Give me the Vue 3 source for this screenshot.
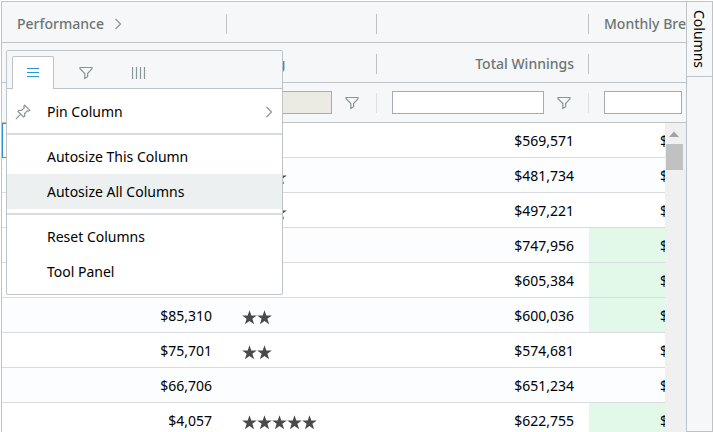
<script setup>
import { ref } from 'vue'

const rows = [
  { bank: '', stars: 0, total: '$569,571', high: false },
  { bank: '', stars: 3, total: '$481,734', high: false },
  { bank: '', stars: 3, total: '$497,221', high: false },
  { bank: '', stars: 0, total: '$747,956', high: true },
  { bank: '', stars: 0, total: '$605,384', high: true },
  { bank: '$85,310', stars: 2, total: '$600,036', high: true },
  { bank: '$75,701', stars: 2, total: '$574,681', high: false },
  { bank: '$66,706', stars: 0, total: '$651,234', high: false },
  { bank: '$4,057', stars: 5, total: '$622,755', high: true }
]

const menuGroups = [
  ['Pin Column'],
  ['Autosize This Column', 'Autosize All Columns'],
  ['Reset Columns', 'Tool Panel']
]
const active = ref('Autosize All Columns')
</script>

<template>
  <main class="grid">
    <section class="content">
      <div class="head">
        <table>
          <colgroup><col class="c-bank"><col class="c-rating"><col class="c-total"><col class="c-month"></colgroup>
          <thead>
            <tr>
              <th class="group">
                <div class="cell sep">
                  <span>Performance</span>
                  <button class="icon-button expand" aria-label="Expand Performance">
                    <svg width="12" height="12" viewBox="0 0 12 12"><path d="M3.5 1 8.5 6l-5 5" /></svg>
                  </button>
                </div>
              </th>
              <th><div class="cell sep"></div></th>
              <th><div class="cell sep"></div></th>
              <th><div class="cell">Monthly Bre</div></th>
            </tr>
            <tr>
              <th><div class="cell sep"></div></th>
              <th><div class="cell sep">Rating</div></th>
              <th><div class="cell sep right">Total Winnings</div></th>
              <th><div class="cell"></div></th>
            </tr>
            <tr>
              <td><div class="cell filter sep"></div></td>
              <td>
                <div class="cell filter sep">
                  <input type="text" disabled aria-label="Rating filter">
                  <button class="icon-button" aria-label="Filter rating">
                    <svg width="14" height="14" viewBox="0 0 14 14"><path d="M1 1.5h12v1.3L8.6 7.5v3.2l-2.8 1.8v-5L1 2.8z" /></svg>
                  </button>
                </div>
              </td>
              <td>
                <div class="cell filter sep">
                  <input type="text" aria-label="Total winnings filter">
                  <button class="icon-button" aria-label="Filter total winnings">
                    <svg width="14" height="14" viewBox="0 0 14 14"><path d="M1 1.5h12v1.3L8.6 7.5v3.2l-2.8 1.8v-5L1 2.8z" /></svg>
                  </button>
                </div>
              </td>
              <td>
                <div class="cell filter">
                  <input type="text" aria-label="Monthly filter">
                  <span class="filter-space"></span>
                </div>
              </td>
            </tr>
          </thead>
        </table>
      </div>

      <div class="body">
        <div class="viewport">
          <table>
            <colgroup><col class="c-bank"><col class="c-rating"><col class="c-total"><col class="c-month"></colgroup>
            <tbody>
              <tr v-for="(row, i) in rows" :key="i">
                <td class="number" :class="{ focused: i === 0 }">{{ row.bank }}</td>
                <td class="rating">
                  <div class="stars">
                    <svg v-for="n in row.stars" :key="n" width="15" height="15" viewBox="0 0 15 15">
                      <polygon points="7.5,0.2 9.3,5.4 14.8,5.4 10.4,8.8 12.1,14.2 7.5,11 2.9,14.2 4.6,8.8 0.2,5.4 5.7,5.4" />
                    </svg>
                  </div>
                </td>
                <td class="number">{{ row.total }}</td>
                <td class="month" :class="{ high: row.high }">$</td>
              </tr>
            </tbody>
          </table>
        </div>
        <div class="scrollbar">
          <svg width="17" height="21" viewBox="0 0 17 21"><path d="M4 14 9 8.5 14 14z" /></svg>
          <div class="thumb"></div>
        </div>
      </div>
    </section>

    <aside class="side">
      <button class="side-tab">Columns</button>
    </aside>

    <div class="menu">
      <div class="tabs">
        <button class="tab selected" aria-label="General">
          <svg width="14" height="12" viewBox="0 0 14 12"><path d="M1 1.5h12M1 5.5h12M1 9.5h12" /></svg>
        </button>
        <button class="tab" aria-label="Filter">
          <svg width="14" height="14" viewBox="0 0 14 14"><path d="M1 1.5h12v1.3L8.6 7.5v3.2l-2.8 1.8v-5L1 2.8z" /></svg>
        </button>
        <button class="tab" aria-label="Choose columns">
          <svg width="14" height="12" viewBox="0 0 14 12"><path d="M.5 0v12M4.5 0v12M8.5 0v12M12.5 0v12" /></svg>
        </button>
      </div>
      <div class="options">
        <div v-for="(group, g) in menuGroups" :key="g" class="option-group">
          <button
            v-for="item in group"
            :key="item"
            class="option"
            :class="{ active: active === item }"
            @mouseenter="active = item"
          >
            <span class="option-icon">
              <svg v-if="item === 'Pin Column'" width="16" height="16" viewBox="0 0 16 16">
                <path d="M9.6 1.2 14.8 6.4 13.4 7.2 12.2 6.9 9.6 9.5 9.7 12.2 8.6 13 3 7.4 3.9 6.3 6.6 6.5 9.2 3.9 8.8 2.6zM5.7 10.2.8 15.1" />
              </svg>
            </span>
            <span class="option-name">{{ item }}</span>
            <svg v-if="item === 'Pin Column'" width="12" height="12" viewBox="0 0 12 12"><path d="M3.5 1 8.5 6l-5 5" /></svg>
          </button>
        </div>
      </div>
    </div>
  </main>
</template>

<style>
body {
  margin: 0;
  background: #fff;
}
</style>

<style scoped>
* {
  box-sizing: border-box;
}
.grid {
  position: relative;
  display: flex;
  height: 100vh;
  padding: 1px 0 0 1px;
  overflow: hidden;
  font-family: "Noto Sans", "Open Sans", sans-serif;
  font-size: 14px;
  line-height: 20px;
  color: #000;
}
button {
  padding: 0;
  border: 0;
  background: none;
  font: inherit;
  color: inherit;
}
svg {
  display: block;
  flex: none;
  fill: none;
  stroke: #8a9597;
  stroke-width: 1.2;
}
.content {
  flex: 1;
  min-width: 0;
  display: flex;
  flex-direction: column;
  border: 1px solid #bdc3c7;
  border-width: 1px 0 0 1px;
}
.head {
  overflow: hidden;
  background: #f5f7f8;
  color: #6d7576;
}
table {
  width: 725px;
  table-layout: fixed;
  border-collapse: separate;
  border-spacing: 0;
}
.c-bank { width: 225px; }
.c-rating { width: 150px; }
.c-total { width: 212px; }
.c-month { width: 138px; }
th, td {
  padding: 0;
  font-weight: 500;
  text-align: left;
  white-space: nowrap;
}
td {
  font-weight: 400;
}
.head th, .head td {
  height: 40px;
  border-bottom: 1px solid #bdc3c7;
}
.head th {
  padding-top: 2px;
}
.head tr:first-child th {
  height: 41px;
  padding-top: 3px;
}
.cell {
  display: flex;
  align-items: center;
  height: 20px;
  padding: 0 15px;
}
.sep {
  padding-right: 14px;
  border-right: 1px solid #bdc3c7;
}
.right {
  justify-content: flex-end;
}
.expand {
  margin-left: 8px;
}
.filter {
  gap: 13px;
}
.filter .icon-button {
  width: 17px;
}
.filter.sep {
  border-color: #dde1e3;
}
input {
  flex: 1;
  min-width: 0;
  height: 23px;
  border: 1px solid #a5acb0;
  border-radius: 0;
  background: #fff;
  font: inherit;
}
input:disabled {
  background: #ebebe4;
}
.filter-space {
  width: 17px;
}
.body {
  flex: 1;
  min-height: 0;
  display: flex;
  background: #fff;
}
.viewport {
  flex: 1;
  min-width: 0;
  overflow: hidden;
}
.body td {
  height: 35px;
  padding-top: 2px;
  border-bottom: 1px solid #d9dcde;
}
.body tr:nth-child(even) td {
  background: #fcfdfe;
}
.body .number {
  padding-right: 15px;
  text-align: right;
}
.body .focused {
  border: 1px solid #2d8fd0;
}
.body .rating {
  padding: 5px 15px 0;
}
.stars {
  display: flex;
}
.stars svg {
  fill: #4a4a4a;
  stroke: none;
}
.body .month {
  padding-left: 71px;
}
.body tr .month.high {
  background: #e2f8e8;
}
.scrollbar {
  width: 21px;
  background: #f0f0f0;
}
.scrollbar svg {
  fill: #a3a3a3;
  stroke: none;
}
.thumb {
  width: 17px;
  height: 26px;
  margin-left: 1px;
  background: #c1c1c1;
}
.side {
  border: 1px solid #bdc3c7;
  background: #f5f7f8;
}
.side-tab {
  display: block;
  width: 25px;
  height: 75px;
  padding-right: 1px;
  border-bottom: 1px solid #bdc3c7;
  writing-mode: vertical-rl;
  line-height: 24px;
}
.menu {
  position: absolute;
  top: 50px;
  left: 6px;
  width: 277px;
  border: 1px solid #bdc3c7;
  border-radius: 2px;
  background: #fff;
}
.tabs {
  display: flex;
  gap: 11px;
  height: 38px;
  padding: 5px 5px 0;
  border-bottom: 1px solid #bdc3c7;
  background: #f5f7f8;
}
.tab {
  display: flex;
  align-items: center;
  justify-content: center;
  width: 42px;
  height: 33px;
}
.tab.selected {
  border: 1px solid #bdc3c7;
  border-bottom: 0;
  border-radius: 2px 2px 0 0;
  background: #fff;
}
.selected svg {
  stroke: #2d94d6;
}
.options {
  padding: 5px 0;
}
.option-group + .option-group {
  margin-top: 4px;
  padding-top: 4px;
  border-top: 2px solid #d9dcde;
}
.option {
  display: flex;
  align-items: center;
  width: 100%;
  height: 35px;
  padding-right: 7px;
  text-align: left;
}
.option.active {
  background: #ecf0f1;
}
.option-icon {
  width: 40px;
  padding-left: 8px;
}
.option-name {
  flex: 1;
}
</style>
